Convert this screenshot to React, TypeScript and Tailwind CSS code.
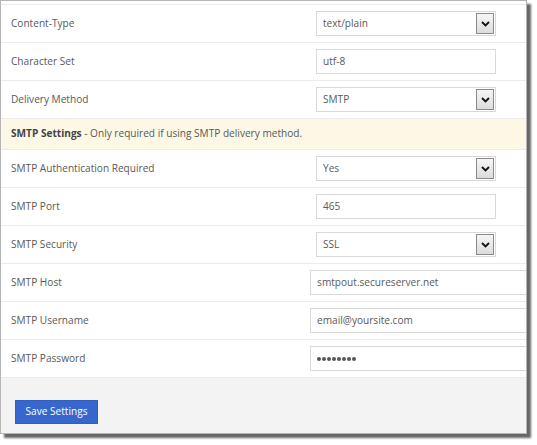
import { ReactNode } from 'react';

type Field = {
  label: string;
  value: string;
  kind: 'select' | 'text' | 'wide' | 'password';
};

const top: Field[] = [
  { label: 'Content-Type', value: 'text/plain', kind: 'select' },
  { label: 'Character Set', value: 'utf-8', kind: 'text' },
  { label: 'Delivery Method', value: 'SMTP', kind: 'select' },
];

const smtp: Field[] = [
  { label: 'SMTP Authentication Required', value: 'Yes', kind: 'select' },
  { label: 'SMTP Port', value: '465', kind: 'text' },
  { label: 'SMTP Security', value: 'SSL', kind: 'select' },
  { label: 'SMTP Host', value: 'smtpout.secureserver.net', kind: 'wide' },
  { label: 'SMTP Username', value: 'email@yoursite.com', kind: 'wide' },
  { label: 'SMTP Password', value: '', kind: 'password' },
];

function Chevron() {
  return (
    <svg width="9" height="6" viewBox="0 0 9 6">
      <path d="M1 1 L4.5 4.5 L8 1" fill="none" stroke="#111" strokeWidth="1.8" />
    </svg>
  );
}

function Control({ field }: { field: Field }) {
  if (field.kind === 'select') {
    return (
      <div className="flex h-[25px] w-[180px] items-center border border-[#d9d9d9] bg-white pl-[6px] pr-[1px]">
        <span className="flex-1">{field.value}</span>
        <span className="flex h-[21px] w-[18px] items-center justify-center border border-[#8a8a8a] bg-gradient-to-b from-[#f6f6f6] to-[#dcdcdc]">
          <Chevron />
        </span>
      </div>
    );
  }
  const wide = field.kind === 'wide' || field.kind === 'password';
  return (
    <div
      className={
        'flex h-[25px] items-center border border-[#d9d9d9] bg-white pl-[6px] ' +
        (wide ? 'w-[220px] border-r-0' : 'w-[180px]')
      }
    >
      {field.kind === 'password' ? (
        <span className="flex gap-[1px]">
          {[0, 1, 2, 3, 4, 5, 6, 7].map((i) => (
            <span key={i} className="h-[4px] w-[4px] rounded-full bg-[#555]" />
          ))}
        </span>
      ) : (
        field.value
      )}
    </div>
  );
}

function Row({ field }: { field: Field }) {
  return (
    <div className="flex h-[38px] items-center border-b border-[#ebebeb]">
      <div className="w-[315px] pl-[10px]">{field.label}</div>
      <Control field={field} />
    </div>
  );
}

function Band({ children }: { children: ReactNode }) {
  return (
    <div className="flex h-[31px] items-center border-b border-[#ebebeb] bg-[#fcf8e5] pl-[10px]">
      {children}
    </div>
  );
}

export default function App() {
  return (
    <div className="h-[445px] w-[537px] overflow-hidden bg-white font-['Open_Sans',sans-serif] text-[10.1px] text-[#595959]">
      <div className="w-[527px] overflow-hidden border border-[#b5b5b5] bg-white shadow-[4px_4px_2px_rgba(0,0,0,0.6)]">
        <div className="mt-[3px] border-t border-[#ebebeb]">
          {top.map((f) => (
            <Row key={f.label} field={f} />
          ))}
          <Band>
            <span>
              <b className="font-bold text-[#444]">SMTP Settings</b> - Only required if using SMTP delivery method.
            </span>
          </Band>
          {smtp.map((f) => (
            <Row key={f.label} field={f} />
          ))}
        </div>
        <div className="h-[55px] bg-[#f3f3f3] pl-[14px] pt-[22px]">
          <button className="h-[24px] w-[83px] border border-[#2f5fc0] bg-[#3767cd] text-[10.1px] text-white">
            Save Settings
          </button>
        </div>
      </div>
    </div>
  );
}
